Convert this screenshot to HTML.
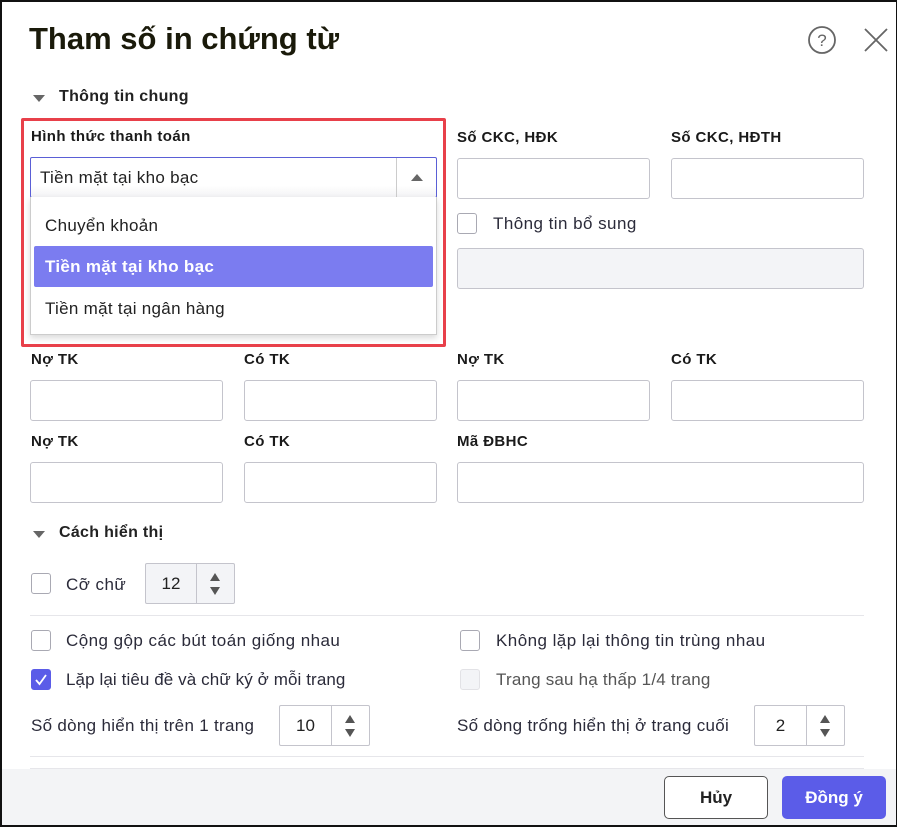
<!DOCTYPE html>
<html><head><meta charset="utf-8"><style>
*{box-sizing:border-box;margin:0;padding:0}
body{width:897px;height:827px;overflow:hidden;background:#fff;font-family:"Liberation Sans",sans-serif;color:#222;position:relative}
.frame{position:absolute;left:0;top:0;width:897px;height:827px;border:2px solid #111;border-right-width:1px;border-bottom-width:2px;pointer-events:none;z-index:10}
.a{position:absolute;white-space:nowrap}
.lbl{font-size:15px;font-weight:bold;color:#1a1a1a;letter-spacing:0.4px}
.t{font-size:17px;color:#2b2b3a;letter-spacing:0.45px}
.in{position:absolute;border:1px solid #c4c4cc;border-radius:3px;background:#fff;height:41px}
.cb{position:absolute;width:20px;height:21px;border:1px solid #a9a9b3;border-radius:3px;background:#fff}
.spin{position:absolute;border:1px solid #c4c4cc;border-radius:2px;background:#fff;height:41px;font-size:17px}
.spin .v{position:absolute;left:0;right:38px;top:10px;text-align:center}
.spin .d{position:absolute;right:0;top:0;width:38px;height:39px;border-left:1px solid #c4c4cc}
.up,.dn{position:absolute;left:13px;width:0;height:0;border-left:5px solid transparent;border-right:5px solid transparent}
.up{top:9px;border-bottom:8px solid #555}
.dn{top:23px;border-top:8px solid #555}
.hr{position:absolute;left:30px;width:834px;height:1px;background:#e6e6ea}
</style></head><body>
<div class="frame"></div>
<div class="a" style="left:29px;top:21px;font-size:31px;font-weight:bold;color:#1a1a0a">Tham số in chứng từ</div>
<svg class="a" style="left:807px;top:25px" width="30" height="30"><circle cx="15" cy="15" r="13" fill="none" stroke="#666" stroke-width="1.8"/><text x="15" y="21" text-anchor="middle" font-family="Liberation Sans" font-size="17" fill="#666">?</text></svg>
<svg class="a" style="left:863px;top:27px" width="26" height="26"><path d="M2 2L24 24M24 2L2 24" stroke="#666" stroke-width="1.8"/></svg>

<div class="a" style="left:33px;top:95px;width:0;height:0;border-left:6px solid transparent;border-right:6px solid transparent;border-top:7px solid #666"></div>
<div class="a" style="left:59px;top:88px;font-size:16px;font-weight:bold;letter-spacing:0.3px">Thông tin chung</div>

<div class="a lbl" style="left:31px;top:128px">Hình thức thanh toán</div>
<div class="a" style="left:30px;top:157px;width:407px;height:41px;border:1px solid #5a5fd6;border-radius:2px;background:linear-gradient(#fff 70%,#f3f3f5)"></div>
<div class="a t" style="left:40px;top:168px;color:#222;letter-spacing:0.3px">Tiền mặt tại kho bạc</div>
<div class="a" style="left:396px;top:158px;width:1px;height:39px;background:#ccc"></div>
<div class="a" style="left:411px;top:174px;width:0;height:0;border-left:6px solid transparent;border-right:6px solid transparent;border-bottom:7px solid #666"></div>
<div class="a" style="left:30px;top:197px;width:407px;height:138px;border:1px solid #ccc;border-top:none;background:#fff;box-shadow:0 3px 6px rgba(0,0,0,.15)"></div>
<div class="a" style="left:45px;top:216px;font-size:17px;color:#222;letter-spacing:0.3px">Chuyển khoản</div>
<div class="a" style="left:34px;top:246px;width:399px;height:41px;background:#7b7cf0;border-radius:2px"></div>
<div class="a" style="left:45px;top:257px;font-size:17px;color:#fff;font-weight:bold;letter-spacing:0.3px">Tiền mặt tại kho bạc</div>
<div class="a" style="left:45px;top:299px;font-size:17px;color:#222;letter-spacing:0.3px">Tiền mặt tại ngân hàng</div>
<div class="a" style="left:21px;top:118px;width:425px;height:229px;border:3px solid #e8404a;border-radius:2px"></div>

<div class="a lbl" style="left:457px;top:129px">Số CKC, HĐK</div>
<div class="a lbl" style="left:671px;top:129px">Số CKC, HĐTH</div>
<div class="in" style="left:457px;top:158px;width:193px"></div>
<div class="in" style="left:671px;top:158px;width:193px"></div>
<div class="cb" style="left:457px;top:213px"></div>
<div class="a t" style="left:493px;top:214px">Thông tin bổ sung</div>
<div class="in" style="left:457px;top:248px;width:407px;background:#f3f4f7"></div>

<div class="a lbl" style="left:31px;top:351px">Nợ TK</div>
<div class="a lbl" style="left:244px;top:351px">Có TK</div>
<div class="a lbl" style="left:457px;top:351px">Nợ TK</div>
<div class="a lbl" style="left:671px;top:351px">Có TK</div>
<div class="in" style="left:30px;top:380px;width:193px"></div>
<div class="in" style="left:244px;top:380px;width:193px"></div>
<div class="in" style="left:457px;top:380px;width:193px"></div>
<div class="in" style="left:671px;top:380px;width:193px"></div>
<div class="a lbl" style="left:31px;top:433px">Nợ TK</div>
<div class="a lbl" style="left:244px;top:433px">Có TK</div>
<div class="a lbl" style="left:457px;top:433px">Mã ĐBHC</div>
<div class="in" style="left:30px;top:462px;width:193px"></div>
<div class="in" style="left:244px;top:462px;width:193px"></div>
<div class="in" style="left:457px;top:462px;width:407px"></div>

<div class="a" style="left:33px;top:531px;width:0;height:0;border-left:6px solid transparent;border-right:6px solid transparent;border-top:7px solid #666"></div>
<div class="a" style="left:59px;top:524px;font-size:16px;font-weight:bold;letter-spacing:0.3px">Cách hiển thị</div>

<div class="cb" style="left:31px;top:573px"></div>
<div class="a t" style="left:66px;top:575px">Cỡ chữ</div>
<div class="spin" style="left:145px;top:563px;width:90px;background:#f3f4f7"><span class="v">12</span><div class="d"><div class="up"></div><div class="dn"></div></div></div>
<div class="hr" style="top:615px"></div>

<div class="cb" style="left:31px;top:630px"></div>
<div class="a t" style="left:66px;top:631px">Cộng gộp các bút toán giống nhau</div>
<div class="cb" style="left:460px;top:630px"></div>
<div class="a t" style="left:496px;top:631px">Không lặp lại thông tin trùng nhau</div>
<div class="cb" style="left:31px;top:669px;background:#5b5ce8;border-color:#5b5ce8"><svg width="18" height="19"><path d="M4 10l3.5 4L14 5" stroke="#fff" stroke-width="1.8" fill="none"/></svg></div>
<div class="a t" style="left:66px;top:670px;letter-spacing:0.1px">Lặp lại tiêu đề và chữ ký ở mỗi trang</div>
<div class="cb" style="left:460px;top:669px;background:#f3f4f7;border-color:#e2e2e6"></div>
<div class="a t" style="left:496px;top:670px;color:#555;letter-spacing:0.2px">Trang sau hạ thấp 1/4 trang</div>

<div class="a t" style="left:31px;top:716px;letter-spacing:0.3px">Số dòng hiển thị trên 1 trang</div>
<div class="spin" style="left:279px;top:705px;width:91px"><span class="v">10</span><div class="d"><div class="up"></div><div class="dn"></div></div></div>
<div class="a t" style="left:457px;top:716px;letter-spacing:0.3px">Số dòng trống hiển thị ở trang cuối</div>
<div class="spin" style="left:754px;top:705px;width:91px"><span class="v">2</span><div class="d"><div class="up"></div><div class="dn"></div></div></div>
<div class="hr" style="top:756px"></div>

<div class="a" style="left:0;top:769px;width:897px;height:58px;background:#f3f4f6"></div>
<div class="hr" style="top:768px"></div>
<div class="a" style="left:664px;top:776px;width:104px;height:43px;border:1px solid #555;border-radius:5px;background:#fff;font-size:17px;font-weight:bold;text-align:center;line-height:41px">Hủy</div>
<div class="a" style="left:782px;top:776px;width:104px;height:43px;border-radius:5px;background:#5b5ce8;color:#fff;font-size:17px;font-weight:bold;text-align:center;line-height:43px">Đồng ý</div>
</body></html>
